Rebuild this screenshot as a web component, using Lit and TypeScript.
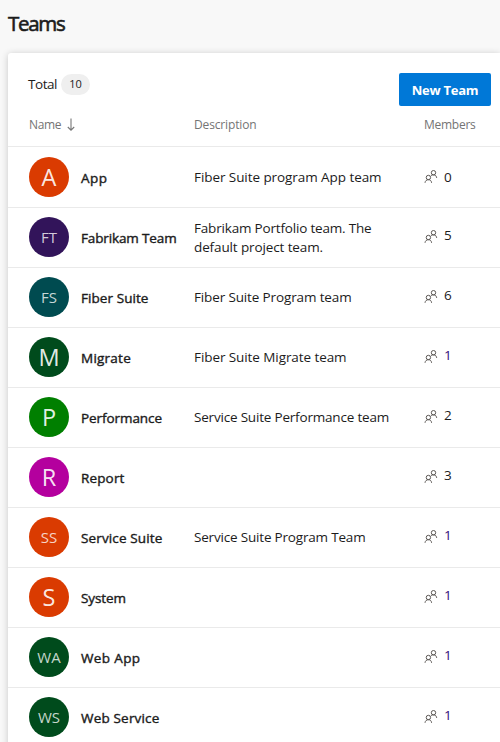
import { LitElement, html, css, svg } from "lit";
import { customElement, property } from "lit/decorators.js";

interface Team {
  name: string;
  nameWidth: number;
  initials: string;
  color: string;
  description: [string, number][];
  members: number;
}

const teams: Team[] = [
  { name: "App", nameWidth: 26.5, initials: "A", color: "#da3b01", description: [["Fiber Suite program App team", 187.5]], members: 0 },
  { name: "Fabrikam Team", nameWidth: 95.5, initials: "FT", color: "#32145a", description: [["Fabrikam Portfolio team. The", 177.5], ["default project team.", 129]], members: 5 },
  { name: "Fiber Suite", nameWidth: 67.5, initials: "FS", color: "#004b50", description: [["Fiber Suite Program team", 157.5]], members: 6 },
  { name: "Migrate", nameWidth: 50, initials: "M", color: "#004b1c", description: [["Fiber Suite Migrate team", 152.5]], members: 1 },
  { name: "Performance", nameWidth: 81, initials: "P", color: "#007f00", description: [["Service Suite Performance team", 195]], members: 2 },
  { name: "Report", nameWidth: 43.5, initials: "R", color: "#b4009e", description: [], members: 3 },
  { name: "Service Suite", nameWidth: 81.5, initials: "SS", color: "#da3b01", description: [["Service Suite Program Team", 171.5]], members: 1 },
  { name: "System", nameWidth: 45, initials: "S", color: "#da3b01", description: [], members: 1 },
  { name: "Web App", nameWidth: 59.5, initials: "WA", color: "#004b1c", description: [], members: 1 },
  { name: "Web Service", nameWidth: 78.5, initials: "WS", color: "#004b1c", description: [], members: 1 },
];

const peopleIcon = svg`
  <circle cx="9.500" cy="2.700" r="2.200"></circle>
  <path d="M6.500 6.300C7.100 5.400 8 4.900 9.500 4.900c2 0 3 1.300 3.200 3"></path>
  <circle cx="4.400" cy="7.500" r="2.200"></circle>
  <path d="M1 12.800c.200-1.900 1.500-3.100 3.400-3.100s3 1.200 3.200 3.100"></path>`;

/** One line of text whose tracking is adjusted to fill a given width. */
@customElement("fit-text")
export class FitText extends LitElement {
  @property() text = "";
  @property({ type: Number }) width = 0;

  static styles = css`
    :host { display: block; white-space: nowrap; }
  `;

  firstUpdated() {
    const span = this.renderRoot.querySelector("span")!;
    const natural = span.getBoundingClientRect().width;
    span.style.letterSpacing = `${(this.width - natural) / this.text.length}px`;
  }

  render() {
    return html`<span>${this.text}</span>`;
  }
}

@customElement("team-row")
export class TeamRow extends LitElement {
  @property({ attribute: false }) team!: Team;

  static styles = css`
    :host {
      display: grid;
      grid-template-columns: 52px 113px 230px 1fr;
      align-items: center;
      height: 59px;
      padding-left: 21px;
      border-bottom: 1px solid #eaeaea;
    }
    .avatar {
      display: flex;
      align-items: center;
      justify-content: center;
      width: 40px;
      height: 40px;
      margin-bottom: 1px;
      border-radius: 50%;
      color: rgba(255, 255, 255, 0.9);
      font-size: 23.5px;
      line-height: 40px;
    }
    .pair { font-size: 15px; color: rgba(255, 255, 255, 0.78); }
    .name { font-size: 13.5px; line-height: 20px; padding-top: 1px; -webkit-text-stroke: 0.4px currentColor; }
    .description { font-size: 13.5px; line-height: 19px; }
    .members { display: flex; align-items: center; gap: 6px; line-height: 20px; font-size: 13.5px; margin-bottom: 2px; }
    .members span { padding-bottom: 3px; }
    :host([first]) { height: 60px; }
    :host([first]) .avatar { margin-bottom: 0; }
    :host([first]) .members { margin-bottom: 0; }
    :host([first]) .members span { padding-bottom: 0; }
    .link { color: #320b78; }
    svg { fill: none; stroke: #5c5855; stroke-width: 1; }
  `;

  render() {
    const t = this.team;
    return html`
      <div class="avatar ${t.initials.length > 1 ? "pair" : ""}" style="background:${t.color}">${t.initials}</div>
      <fit-text class="name" .text=${t.name} .width=${t.nameWidth}></fit-text>
      <div class="description">
        ${t.description.map(([line, width]) => html`<fit-text .text=${line} .width=${width}></fit-text>`)}
      </div>
      <div class="members">
        <svg width="14" height="14" viewBox="0 0 14 14">${peopleIcon}</svg>
        <span class=${t.members === 1 ? "link" : ""}>${t.members}</span>
      </div>
    `;
  }
}

@customElement("app-root")
export class AppRoot extends LitElement {
  static styles = css`
    :host {
      display: block;
      box-sizing: border-box;
      height: 742px;
      overflow: hidden;
      padding-left: 8px;
      background: #f8f8f8;
      color: #1c1c1c;
      font-family: "Open Sans", "Noto Sans", sans-serif;
    }
    h1 {
      display: flex;
      align-items: center;
      height: 47px;
      margin: 0 0 6px;
      font-size: 20.5px;
      font-weight: 400;
      line-height: 27px;
      -webkit-text-stroke: 0.6px currentColor;
    }
    .card {
      height: 720px;
      background: #fff;
      border-radius: 3px 0 0 0;
      box-shadow: 0 1px 7px rgba(0, 0, 0, 0.2);
    }
    .toolbar {
      display: flex;
      align-items: center;
      height: 53px;
      padding: 0 9px 0 20px;
    }
    .total { display: flex; align-items: center; flex: 1; gap: 4px; padding-top: 9px; font-size: 13.5px; line-height: 20px; }
    .count {
      width: 29px;
      height: 21px;
      border-radius: 11px;
      background: #efefef;
      text-align: center;
      font-size: 11px;
      line-height: 20px;
    }
    button {
      display: flex;
      align-items: center;
      justify-content: center;
      width: 92px;
      height: 33px;
      padding: 0;
      margin-top: 20px;
      border: 0;
      border-radius: 2px;
      background: #0078d7;
      color: #fff;
      font-family: inherit;
      font-size: 13px;
      font-weight: 700;
      line-height: 20px;
    }
    .columns {
      display: grid;
      grid-template-columns: 165px 230px 1fr;
      align-items: center;
      height: 38px;
      padding: 0 0 2px 21px;
      border-bottom: 1px solid #eaeaea;
      color: #747474;
      font-size: 12px;
      line-height: 16px;
    }
    .sort { display: flex; align-items: center; gap: 6px; }
    .sort svg { fill: none; stroke: #777; stroke-width: 1.100; }
  `;

  render() {
    return html`
      <h1><fit-text .text=${"Teams"} .width=${56.5}></fit-text></h1>
      <div class="card">
        <div class="toolbar">
          <div class="total">
            <fit-text .text=${"Total"} .width=${29}></fit-text>
            <div class="count">${teams.length}</div>
          </div>
          <button><fit-text .text=${"New Team"} .width=${66.5}></fit-text></button>
        </div>
        <div class="columns">
          <div class="sort">
            <fit-text .text=${"Name"} .width=${32}></fit-text>
            <svg width="8" height="14" viewBox="0 0 8 14"><path d="M4 .500v11.500M.800 9 4 12.200l3.200-3.200"></path></svg>
          </div>
          <fit-text .text=${"Description"} .width=${62.5}></fit-text>
          <fit-text .text=${"Members"} .width=${51.5}></fit-text>
        </div>
        ${teams.map((team, i) => html`<team-row .team=${team} ?first=${i === 0}></team-row>`)}
      </div>
    `;
  }
}
